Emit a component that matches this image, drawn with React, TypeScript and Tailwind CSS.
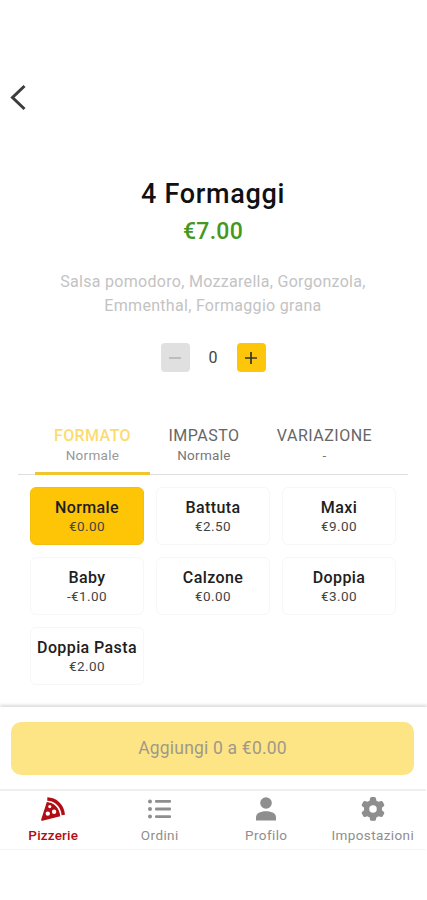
import { FaGear } from "react-icons/fa6";

const tabs = [
  { label: "FORMATO", value: "Normale", width: "w-[115px]", active: true },
  { label: "IMPASTO", value: "Normale", width: "w-[108px]" },
  { label: "VARIAZIONE", value: "-", width: "w-[133px]" },
];

const sizes = [
  { name: "Normale", price: "€0.00", selected: true },
  { name: "Battuta", price: "€2.50" },
  { name: "Maxi", price: "€9.00" },
  { name: "Baby", price: "-€1.00" },
  { name: "Calzone", price: "€0.00" },
  { name: "Doppia", price: "€3.00" },
  { name: "Doppia Pasta", price: "€2.00" },
];

function PizzaIcon() {
  return (
    <svg width="24" height="24" viewBox="0 0 24 24" fill="none">
      <path d="M6.300 2C14.500 2.200 21.500 8.500 22.300 18" stroke="currentColor" strokeWidth="3.400" />
      <path
        fillRule="evenodd"
        fill="currentColor"
        d="M5.800 4.900C13 5.300 18.700 11.200 19.300 19.200L1.500 23.700C0.600 23.900 0 23.300 0.200 22.400ZM8.800 8a1.600 1.600 0 1 0 0 3.200a1.600 1.600 0 1 0 0-3.200ZM6.800 14.400a2.200 2.200 0 1 0 0 4.400a2.200 2.200 0 1 0 0-4.400ZM13.100 12.600a2.200 2.200 0 1 0 0 4.400a2.200 2.200 0 1 0 0-4.400Z"
      />
    </svg>
  );
}

function ListIcon() {
  return (
    <svg width="23" height="20" viewBox="0 0 23 20" fill="currentColor">
      <circle cx="2" cy="2.500" r="2" />
      <circle cx="2" cy="10" r="2" />
      <circle cx="2" cy="17.500" r="2" />
      <rect x="7" y="1" width="16" height="2.800" rx="1" />
      <rect x="7" y="8.600" width="16" height="2.800" rx="1" />
      <rect x="7" y="16.200" width="16" height="2.800" rx="1" />
    </svg>
  );
}

function PersonIcon() {
  return (
    <svg width="20" height="24" viewBox="0 0 20 24" fill="currentColor">
      <circle cx="10" cy="6" r="5.800" />
      <path d="M0 23.500V20.500C0 16.500 4 14.300 10 14.300S20 16.500 20 20.500V23.500Z" />
    </svg>
  );
}

const navItems = [
  { label: "Pizzerie", icon: <PizzaIcon />, active: true },
  { label: "Ordini", icon: <ListIcon /> },
  { label: "Profilo", icon: <PersonIcon /> },
  { label: "Impostazioni", icon: <FaGear size={24} /> },
];

export default function App() {
  return (
    <div className="flex h-[900px] w-[427px] flex-col overflow-hidden bg-white font-[Roboto,sans-serif] text-[#202020]">
      {/* Back button */}
      <header className="h-[176px] shrink-0 pt-[84px] pl-[10px]">
        <svg width="16" height="27" viewBox="0 0 16 27" fill="none" stroke="#3c3c3c" strokeWidth="3">
          <path d="M14.500 2L2.500 13.500L14.500 25" />
        </svg>
      </header>

      {/* Product */}
      <section className="flex w-[426px] shrink-0 flex-col items-center text-center">
        <h1 className="h-9 text-[27px] leading-9 font-medium tracking-[0.7px] text-[#111]">4 Formaggi</h1>
        <p className="mt-1 h-8 text-[23px] leading-8 font-medium tracking-[0.3px] text-[#44991c]">€7.00</p>
        <p className="mt-[22px] w-[340px] text-base leading-6 tracking-[0.3px] text-[#c3c3c3]">
          Salsa pomodoro, Mozzarella, Gorgonzola, Emmenthal, Formaggio grana
        </p>
        <div className="mt-[25px] flex items-center">
          <button className="flex size-[29px] items-center justify-center rounded bg-[#e0e0e0]">
            <span className="h-0.5 w-3 bg-[#bdbdbd]" />
          </button>
          <span className="w-[47px] pt-px text-base text-[#444]">0</span>
          <button className="flex size-[29px] items-center justify-center rounded bg-[#fdc60b]">
            <svg width="12" height="12" viewBox="0 0 12 12" stroke="#333" strokeWidth="1.700">
              <path d="M6 0V12M0 6H12" />
            </svg>
          </button>
        </div>
      </section>

      {/* Option tabs */}
      <nav className="mr-[19px] ml-[18px] mt-[53px] flex h-[50px] shrink-0 border-b border-[#dedede] pl-[17px]">
        {tabs.map((tab) => (
          <div
            key={tab.label}
            className={`${tab.width} -mb-px flex flex-col items-center border-b-[3px] pt-px ${
              tab.active ? "border-[#efc62f]" : "border-transparent"
            }`}
          >
            <span
              className={`text-base leading-5 ${
                tab.active ? "font-medium tracking-[0.4px] text-[#fcdc70]" : "tracking-[0.5px] text-[#666]"
              }`}
            >
              {tab.label}
            </span>
            <span
              className={`text-[13.5px] leading-[19px] tracking-[0.3px] ${tab.active ? "text-[#999]" : "text-[#777]"}`}
            >
              {tab.value}
            </span>
          </div>
        ))}
      </nav>

      {/* Size cards */}
      <div className="mt-3 ml-[30px] grid shrink-0 grid-cols-[repeat(3,114px)] auto-rows-[58px] gap-3">
        {sizes.map((size) => (
          <div
            key={size.name}
            className={`flex flex-col items-center rounded-md border pt-[10px] whitespace-nowrap ${
              size.selected ? "border-[#f3be10] bg-[#fec507]" : "border-[#f7f7f7] bg-white"
            }`}
          >
            <span className="text-base leading-5 font-medium tracking-[0.4px]">{size.name}</span>
            <span className="text-[13.5px] leading-[17px] tracking-[0.4px] text-[#444]">{size.price}</span>
          </div>
        ))}
      </div>

      {/* Add to cart */}
      <div className="mt-auto h-[82px] shrink-0 bg-white px-[11px] pt-[15px] shadow-[0_-2px_3px_rgba(0,0,0,0.14)]">
        <button className="h-[53px] w-[403px] rounded-[10px] bg-[#fde485] text-[17.5px] text-[#a0998a] tracking-[0.2px]">
          Aggiungi 0 a €0.00
        </button>
      </div>

      {/* Bottom navigation */}
      <nav className="mb-[50px] grid h-[61px] w-[426px] shrink-0 grid-cols-4 border-t-2 border-b border-t-[#efefef] border-b-[#f4f4f4]">
        {navItems.map((item) => (
          <div
            key={item.label}
            className={`flex flex-col items-center pt-[5px] ${item.active ? "text-[#b00e14]" : "text-[#8e8e8e]"}`}
          >
            <div className="flex h-[26px] items-center">{item.icon}</div>
            <span
              className={`text-[13.5px] leading-[26px] ${item.active ? "font-medium tracking-[0.2px]" : "tracking-[0.4px]"}`}
            >
              {item.label}
            </span>
          </div>
        ))}
      </nav>
    </div>
  );
}
